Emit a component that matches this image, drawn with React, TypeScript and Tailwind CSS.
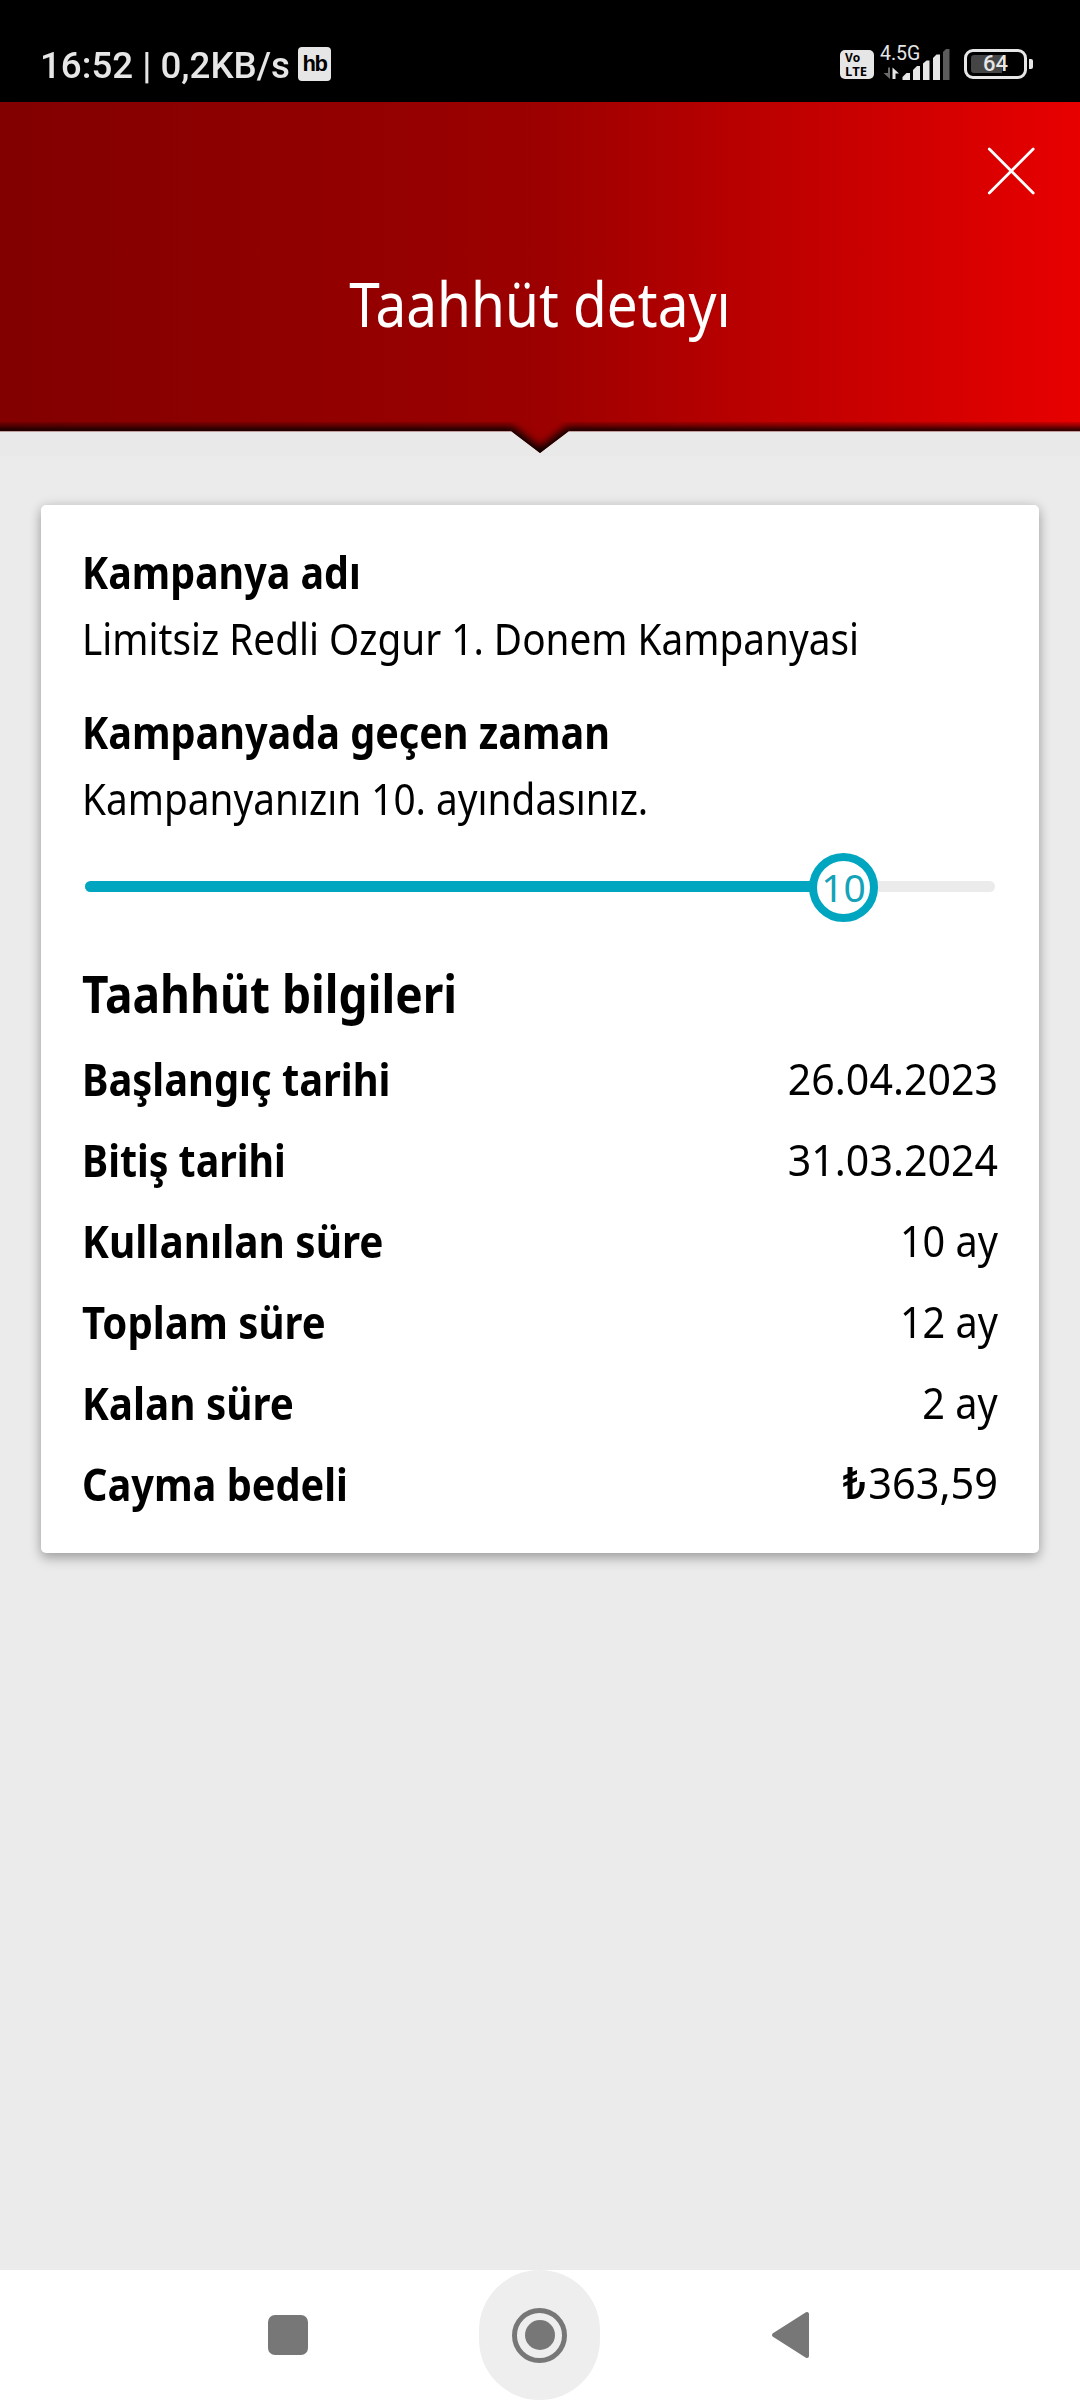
type Row = { label: string; labelScale: string; value: string; valueScale: string; currency?: boolean };

const rows: Row[] = [
  { label: "Başlangıç tarihi", labelScale: "scale-x-[0.905]", value: "26.04.2023", valueScale: "scale-x-[0.934]" },
  { label: "Bitiş tarihi", labelScale: "scale-x-[0.893]", value: "31.03.2024", valueScale: "scale-x-[0.934]" },
  { label: "Kullanılan süre", labelScale: "scale-x-[0.921]", value: "10 ay", valueScale: "scale-x-[0.9]" },
  { label: "Toplam süre", labelScale: "scale-x-[0.912]", value: "12 ay", valueScale: "scale-x-[0.9]" },
  { label: "Kalan süre", labelScale: "scale-x-[0.918]", value: "2 ay", valueScale: "scale-x-[0.9]" },
  { label: "Cayma bedeli", labelScale: "scale-x-[0.902]", value: "363,59", valueScale: "scale-x-[0.943]", currency: true },
];

function StatusBar() {
  return (
    <div className="flex h-[102px] items-start justify-between bg-black pl-[40px] pr-[47px] font-['Roboto',sans-serif] text-[#e6e6e6]">
      <div className="flex items-start">
        <span className="mt-[44px] w-[250px] origin-left scale-x-[0.992] whitespace-pre text-[37px] font-medium leading-[44px]">16:52 | 0,2KB/s</span>
        <span className="ml-[8px] mt-[47px] flex h-[34px] w-[33px] items-center justify-center rounded-[4px] bg-[#e6e6e6] font-['Liberation_Sans',sans-serif] text-[22px] font-bold leading-none tracking-[-1.5px] text-black">
          hb
        </span>
      </div>
      <div className="flex items-start">
        <div className="mt-[50px] flex h-[29px] w-[34px] flex-col items-start rounded-[5px] bg-[#e6e6e6] pl-[5px] pt-[1px] font-['Open_Sans',sans-serif] font-bold text-black">
          <span className="text-[12px] leading-[14px]">Vo</span>
          <span className="text-[13px] leading-[13px]">LTE</span>
        </div>
        <div className="relative ml-[6px] mt-[40px] h-[40px] w-[70px]">
          <span className="absolute left-0 top-[3px] text-[19.500px] leading-[22px]">4.5G</span>
          <svg viewBox="880 40 70 40" className="h-[40px] w-[70px]" fill="#e6e6e6">
            <path d="M888 67.500h2V79l-6.500-6h4.500z" fill="#6a6a6a" />
            <path d="M892.500 79V67.500l6.500 6h-3.500V79z" />
            <path d="M902.500 80v-3l4-4h3.500v7z" />
            <path d="M913 80V70l4-4h3v14z" />
            <path d="M923 80V63.500l3.500-3h3V80z" />
            <path d="M933 80V58l3.500-3.500h3.500V80z" />
            <path d="M943 80V52l3-3h3.500v31z" fill="#5c5c5c" />
          </svg>
        </div>
        <div className="ml-[14px] mt-[49px] flex items-center">
          <div className="relative flex h-[30px] w-[63px] items-center justify-center rounded-[9px] border-[3px] border-[#e6e6e6]">
            <div className="absolute left-[4px] top-[3px] h-[18px] w-[31px] rounded-l-[3px] bg-[#454545]" />
            <span className="relative text-[22px] font-medium leading-[24px]">64</span>
          </div>
          <div className="ml-[2px] h-[10px] w-[4px] rounded-r-[2px] bg-[#e6e6e6]" />
        </div>
      </div>
    </div>
  );
}

function Header() {
  return (
    <header className="relative h-[329px]">
      <svg viewBox="0 0 1080 360" className="absolute left-0 top-0 h-[360px] w-[1080px]">
        <defs>
          <linearGradient id="red" x1="0" x2="1080" y1="0" y2="0" gradientUnits="userSpaceOnUse">
            <stop offset="0" stopColor="#820000" />
            <stop offset="0.5" stopColor="#9c0000" />
            <stop offset="1" stopColor="#e80000" />
          </linearGradient>
          <clipPath id="shape">
            <path d="M0 0H1080V329H569L540 351L511 329H0z" />
          </clipPath>
          <filter id="soft" x="-5%" y="-50%" width="110%" height="200%">
            <feGaussianBlur stdDeviation="4.500" />
          </filter>
        </defs>
        <rect x="0" y="329" width="1080" height="25" fill="#e9e9e9" />
        <g clipPath="url(#shape)">
          <rect width="1080" height="360" fill="url(#red)" />
          <path
            d="M-20 331H511L540 353L569 331H1100"
            fill="none"
            stroke="#000"
            strokeWidth="12"
            filter="url(#soft)"
          />
        </g>
        <path d="M0 329.500H511M569 329.500H1080" stroke="#b98a8a" strokeWidth="1" opacity="0.8" />
      </svg>
      <div className="relative flex h-full flex-col">
        <div className="flex justify-end pr-[43px] pt-[43px]">
          <svg viewBox="0 0 52 52" className="h-[52px] w-[52px]" stroke="#fff" strokeWidth="2.800" strokeLinecap="round">
            <path d="M4.300 4.100L48.200 48M48.200 4.100L4.300 48" />
          </svg>
        </div>
        <h1 className="mt-[66px] flex scale-x-[0.886] justify-center text-[62px] leading-[80px] text-white">Taahhüt detayı</h1>
      </div>
    </header>
  );
}

function ProgressSlider() {
  return (
    <div className="relative ml-[3px] mr-[3px] mt-[25px] h-[69px]">
      <div className="absolute inset-x-0 top-[28px] flex h-[11px] overflow-hidden rounded-full bg-[#ebebeb]">
        <div className="w-[758px] bg-[#00a6c0]" />
      </div>
      <div className="absolute left-[724px] top-0 flex h-[69px] w-[69px] items-center justify-center rounded-full border-8 border-[#00a6c0] bg-white text-[39px] leading-[50px] text-[#14a3b8]">
        <span className="pb-px">10</span>
      </div>
    </div>
  );
}

function NavBar() {
  return (
    <nav className="flex h-[130px] items-center bg-white pl-[268px]">
      <div className="h-[40px] w-[40px] rounded-[7px] bg-[#777]" />
      <div className="ml-[171px] flex h-[130px] w-[121px] items-center justify-center rounded-[61px] bg-[#eee]">
        <div className="flex h-[55px] w-[55px] items-center justify-center rounded-full border-[5px] border-[#777]">
          <div className="h-[30px] w-[30px] rounded-full bg-[#777]" />
        </div>
      </div>
      <svg viewBox="0 0 40 48" className="ml-[170px] h-[48px] w-[40px]" fill="#777" stroke="#777" strokeWidth="4" strokeLinejoin="round">
        <path d="M4 24L37 3V45z" />
      </svg>
    </nav>
  );
}

export default function App() {
  return (
    <div className="flex h-[2400px] w-[1080px] flex-col bg-[#ebebeb] font-['Noto_Sans',sans-serif] text-black">
      <StatusBar />
      <Header />
      <main className="flex-1 px-[41px] pt-[74px]">
        <section className="h-[1048px] w-[998px] rounded-[5px] bg-white pl-[41px] pr-[41px] pt-[37px] text-[44px] leading-[60px] shadow-[0_6px_12px_rgba(0,0,0,0.25),0_0_12px_rgba(0,0,0,0.13)]">
          <h2 className="origin-left scale-x-[0.895] whitespace-nowrap font-bold">Kampanya adı</h2>
          <p className="mt-[6px] origin-left scale-x-[0.88] whitespace-nowrap">Limitsiz Redli Ozgur 1. Donem Kampanyasi</p>
          <h2 className="mt-[34px] origin-left scale-x-[0.899] whitespace-nowrap font-bold">Kampanyada geçen zaman</h2>
          <p className="mt-[6px] origin-left scale-x-[0.881] whitespace-nowrap">Kampanyanızın 10. ayındasınız.</p>
          <ProgressSlider />
          <h3 className="mb-[15px] mt-[41px] origin-left scale-x-[0.886] text-[52px] font-bold">Taahhüt bilgileri</h3>
          {rows.map((row) => (
            <div key={row.label} className="flex h-[81px] items-center justify-between">
              <span className={`origin-left font-bold ${row.labelScale}`}>{row.label}</span>
              <span className={`mb-[2px] origin-right ${row.valueScale}`}>
                {row.currency && <span className="mr-[2px] font-['Roboto',sans-serif] font-medium">₺</span>}
                {row.value}
              </span>
            </div>
          ))}
        </section>
      </main>
      <NavBar />
    </div>
  );
}
